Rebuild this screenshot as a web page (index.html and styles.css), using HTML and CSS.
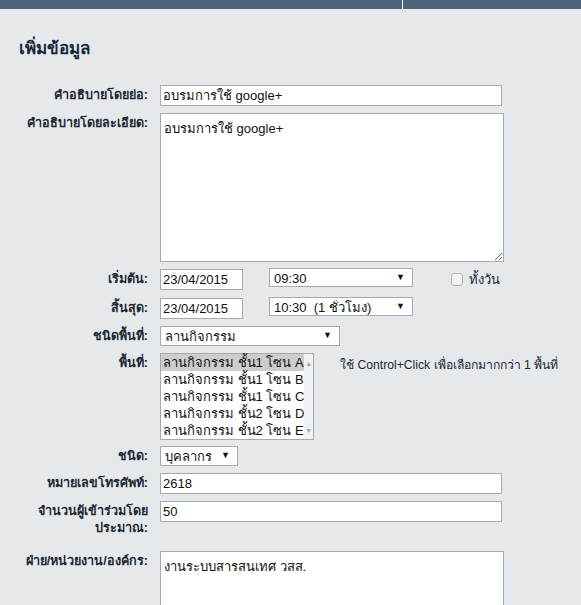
FILE: index.html
```html
<!DOCTYPE html>
<html>
<head>
    <title>เพิ่มข้อมูล</title>
    <meta charset="utf-8">
    <link rel="stylesheet" href="styles.css">
</head>
<body>
    <div class="topbar">
        <div class="topbar-left"></div>
        <div class="topbar-right"></div>
    </div>

    <div class="page">
        <h1>เพิ่มข้อมูล</h1>

        <div class="form">
            <!-- คำอธิบาย -->
            <div class="row">
                <label class="label">คำอธิบายโดยย่อ:</label>
                <div class="field"><input type="text" class="text-wide" value="อบรมการใช้ google+"></div>
            </div>
            <div class="row">
                <label class="label">คำอธิบายโดยละเอียด:</label>
                <div class="field"><textarea class="area-desc">อบรมการใช้ google+</textarea></div>
            </div>

            <!-- เวลา -->
            <div class="row row-start">
                <label class="label">เริ่มต้น:</label>
                <div class="field inline">
                    <input type="text" class="text-date" value="23/04/2015">
                    <div class="select-wrap time-select"><select><option>09:30</option></select></div>
                    <label class="allday"><input type="checkbox" class="check"> ทั้งวัน</label>
                </div>
            </div>
            <div class="row">
                <label class="label">สิ้นสุด:</label>
                <div class="field inline">
                    <input type="text" class="text-date" value="23/04/2015">
                    <div class="select-wrap time-select"><select><option>10:30&nbsp; (1 ชั่วโมง)</option></select></div>
                </div>
            </div>

            <!-- พื้นที่ -->
            <div class="row">
                <label class="label">ชนิดพื้นที่:</label>
                <div class="field"><div class="select-wrap area-type"><select><option>ลานกิจกรรม</option></select></div></div>
            </div>
            <div class="row row-list">
                <label class="label">พื้นที่:</label>
                <div class="field inline-top">
                    <div class="listbox">
                        <ul class="list-items">
                            <li class="selected">ลานกิจกรรม ชั้น1 โซน A</li>
                            <li>ลานกิจกรรม ชั้น1 โซน B</li>
                            <li>ลานกิจกรรม ชั้น1 โซน C</li>
                            <li>ลานกิจกรรม ชั้น2 โซน D</li>
                            <li>ลานกิจกรรม ชั้น2 โซน E</li>
                        </ul>
                        <div class="list-scroll">
                            <span class="arrow-up">&#9650;</span>
                            <span class="arrow-down">&#9660;</span>
                        </div>
                    </div>
                    <span class="hint">ใช้ Control+Click เพื่อเลือกมากกว่า 1 พื้นที่</span>
                </div>
            </div>

            <div class="row row-loose">
                <label class="label">ชนิด:</label>
                <div class="field"><div class="select-wrap kind"><select><option>บุคลากร</option></select></div></div>
            </div>
            <div class="row row-loose">
                <label class="label">หมายเลขโทรศัพท์:</label>
                <div class="field"><input type="text" class="text-wide" value="2618"></div>
            </div>
            <div class="row row-count">
                <label class="label">จำนวนผู้เข้าร่วมโดยประมาณ:</label>
                <div class="field"><input type="text" class="text-wide" value="50"></div>
            </div>
            <div class="row">
                <label class="label">ฝ่าย/หน่วยงาน/องค์กร:</label>
                <div class="field"><textarea class="area-org">งานระบบสารสนเทศ วสส.</textarea></div>
            </div>
        </div>
    </div>
</body>
</html>
```

FILE: styles.css
```css
body {
    margin: 0;
    padding: 0;
    background-color: #e6e9ec;
    font-family: "Liberation Sans", Arial, sans-serif;
    color: #1d2833;
    overflow: hidden;
}

.topbar {
    display: flex;
    height: 9px;
    background-color: #4b6379;
}

.topbar-left {
    width: 402px;
    border-right: 1px solid #ffffff;
}

.page {
    padding: 0 8px;
}

h1 {
    margin: 0;
    padding: 28px 0 0 11px;
    height: 48px;
    font-size: 17px;
    line-height: 24px;
    font-weight: bold;
    color: #17273a;
}

.row {
    display: grid;
    grid-template-columns: 140px 1fr;
    column-gap: 12px;
    margin-bottom: 7px;
    align-items: start;
}

.label {
    text-align: right;
    font-size: 12.6px;
    font-weight: bold;
    line-height: 17px;
    padding-top: 2px;
    color: #1d2833;
}

.field {
    min-width: 0;
}

.inline {
    display: flex;
    align-items: flex-start;
    height: 21px;
}

.inline-top {
    display: flex;
    align-items: flex-start;
}

input[type="text"],
textarea {
    box-sizing: border-box;
    border: 1px solid #a9a9a9;
    background: #ffffff;
    font-family: "Liberation Sans", Arial, sans-serif;
    font-size: 13px;
    color: #111111;
    margin: 0;
}

input[type="text"] {
    display: block;
    height: 21px;
    padding: 1px 2px;
}

.text-wide {
    width: 342px;
}

.text-date {
    width: 83px;
}

textarea {
    display: block;
    width: 344px;
    padding: 4px 3px;
    resize: vertical;
}

.area-desc {
    height: 149px;
}

.area-org {
    height: 80px;
}

.select-wrap {
    position: relative;
    box-sizing: border-box;
    height: 20px;
    border: 1px solid #a9a9a9;
    background: #ffffff;
}

.select-wrap select {
    appearance: none;
    -webkit-appearance: none;
    border: none;
    background: transparent;
    width: 100%;
    height: 18px;
    padding: 0 4px;
    margin: 0;
    font-family: "Liberation Sans", Arial, sans-serif;
    font-size: 13px;
    color: #111111;
    outline: none;
}

.select-wrap::after {
    content: "\25BC";
    position: absolute;
    right: 7px;
    top: 3px;
    font-size: 9px;
    color: #111111;
    pointer-events: none;
}

.time-select {
    width: 144px;
    margin-left: 26px;
    height: 19px;
    margin-top: -1px;
}

.area-type {
    width: 180px;
}

.kind {
    width: 78px;
}

.allday {
    display: flex;
    align-items: center;
    margin-left: 38px;
    height: 21px;
    line-height: 17px;
    font-size: 13px;
    color: #1d2833;
}

.check {
    appearance: none;
    -webkit-appearance: none;
    box-sizing: border-box;
    width: 12px;
    height: 13px;
    margin: 0 6px 0 0;
    border: 1px solid #b5b5b5;
    border-radius: 3px;
    background: #f4f4f4;
}

.row-start {
    margin-bottom: 8px;
}

.row-list {
    margin-top: 2px;
    margin-bottom: 6px;
}

.row-loose {
    margin-top: 1px;
}

.row-count {
    margin-top: 1px;
    margin-bottom: 14px;
}

.listbox {
    display: flex;
    box-sizing: border-box;
    width: 154px;
    height: 87px;
    border: 1px solid #a9a9a9;
    background: #ffffff;
}

.list-items {
    list-style: none;
    margin: 0;
    padding: 0;
    flex: 1;
    font-size: 13px;
    color: #111111;
}

.list-items li {
    height: 17px;
    line-height: 17px;
    padding-left: 2px;
    white-space: nowrap;
}

.list-items .selected {
    background-color: #cdcdcd;
}

.list-scroll {
    display: flex;
    flex-direction: column;
    justify-content: space-between;
    width: 16px;
    background: #f1f1f1;
    color: #a3a3a3;
    font-size: 7px;
    text-align: center;
    padding: 6px 0 5px;
}

.hint {
    margin-left: 26px;
    margin-top: 2px;
    font-size: 12.2px;
    color: #1d2833;
    white-space: nowrap;
}
```
